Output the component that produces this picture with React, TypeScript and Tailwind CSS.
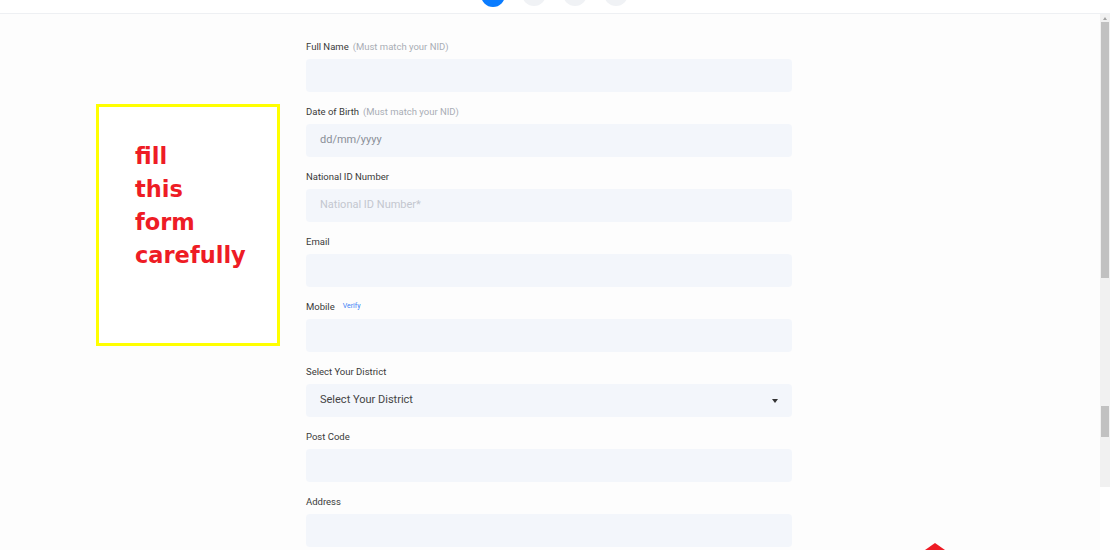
import React from "react";

const fields = [
  { label: "Full Name", hint: "(Must match your NID)", placeholder: "" },
  { label: "Date of Birth", hint: "(Must match your NID)", placeholder: "dd/mm/yyyy", tone: "text-[#8a8f98]" },
  { label: "National ID Number", placeholder: "National ID Number*", tone: "text-[#c3c7cf]" },
  { label: "Email", placeholder: "" },
  { label: "Mobile", verify: true, placeholder: "" },
  { label: "Select Your District", select: true },
  { label: "Post Code", placeholder: "" },
  { label: "Address", placeholder: "" },
];

function Field({ f }: { f: (typeof fields)[number] }) {
  return (
    <div className="flex flex-col">
      <div className="h-[13px] mb-[6px] flex items-center gap-1 text-[9.5px] leading-none text-[#3a3a3a]">
        <span>{f.label}</span>
        {f.hint && <span className="text-[#a9adb5]">{f.hint}</span>}
        {f.verify && <span className="ml-1 text-[7px] text-[#3b82f6]">Verify</span>}
      </div>
      <div className="h-[33px] rounded-[4px] bg-[#f3f6fb] flex items-center justify-between px-[14px] text-[11px]">
        {f.select ? (
          <>
            <span className="text-[#444]">Select Your District</span>
            <span className="w-0 h-0 border-l-[3px] border-r-[3px] border-t-[4px] border-l-transparent border-r-transparent border-t-[#333]" />
          </>
        ) : (
          <span className={f.tone}>{f.placeholder}</span>
        )}
      </div>
    </div>
  );
}

export default function App() {
  return (
    <div className="w-[1110px] h-[550px] overflow-hidden bg-[#fdfdfd] font-['Roboto',sans-serif] flex flex-col">
      {/* stepper */}
      <div className="h-[14px] shrink-0 border-b border-[#eef0f3] overflow-hidden flex pl-[481px] gap-[17px] bg-white">
        <div className="w-6 h-6 -mt-[17px] rounded-full bg-[#0a7cff]" />
        <div className="w-6 h-6 -mt-[18px] rounded-full bg-[#f0f2f5]" />
        <div className="w-6 h-6 -mt-[18px] rounded-full bg-[#f0f2f5]" />
        <div className="w-6 h-6 -mt-[18px] rounded-full bg-[#f0f2f5]" />
      </div>

      <div className="flex flex-1">
        <div className="flex-1 flex">
          {/* note box */}
          <div className="w-[306px] shrink-0 pl-[96px] pt-[90px]">
            <div className="w-[184px] h-[242px] border-[3px] border-[#ffff00] pl-[36px] pt-[33px] font-['DejaVu_Sans',Verdana,sans-serif] font-bold text-[22.5px] leading-[33px] text-[#ee1c25] bg-white">
              <div>fill</div>
              <div>this</div>
              <div>form</div>
              <div>carefully</div>
            </div>
          </div>

          {/* form */}
          <div className="w-[486px] flex flex-col gap-[13px] pt-[26px]">
            {fields.map((f) => (
              <Field key={f.label} f={f} />
            ))}
          </div>
          <div className="flex-1 relative">
            <div className="absolute left-[133px] bottom-0 w-0 h-0 border-l-[10px] border-r-[10px] border-b-[7px] border-l-transparent border-r-transparent border-b-[#ee1c25]" />
          </div>
        </div>

        {/* scrollbar */}
        <div className="w-[10px] shrink-0 flex flex-col">
          <div className="h-[473px] bg-[#f1f1f1] flex flex-col">
            <div className="h-[8px] flex justify-center items-center">
              <span className="w-0 h-0 border-l-[2px] border-r-[2px] border-b-[3px] border-l-transparent border-r-transparent border-b-[#a3a3a3]" />
            </div>
            <div className="h-[256px] mx-[1px] bg-[#c1c1c1]" />
            <div className="h-[128px]" />
            <div className="h-[31px] mx-[1px] bg-[#c1c1c1]" />
          </div>
          <div className="flex-1 bg-white" />
        </div>
      </div>
    </div>
  );
}
